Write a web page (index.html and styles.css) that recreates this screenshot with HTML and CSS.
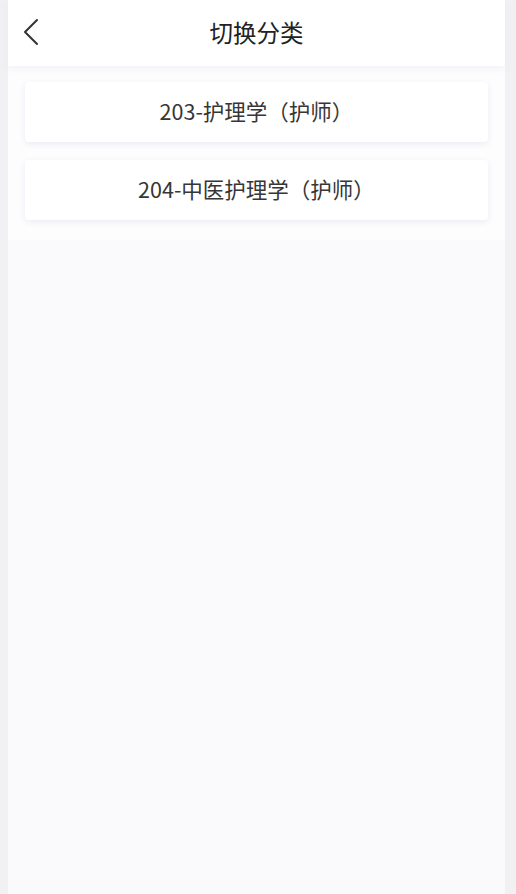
FILE: index.html
```html
<!DOCTYPE html>
<html lang="zh">
<head>
<meta charset="utf-8">
<title>切换分类</title>
<link rel="stylesheet" href="styles.css">
</head>
<body>
<div class="frame">
  <div class="panel">
    <header class="topbar">
      <button class="back" aria-label="返回">
        <svg width="18" height="28" viewBox="0 0 18 28"><path d="M15 2 L3 14 L15 26" fill="none" stroke="#333" stroke-width="2" stroke-linecap="round" stroke-linejoin="round"/></svg>
      </button>
      <h1 class="title">切换分类</h1>
    </header>
    <div class="list">
      <div class="card">203-护理学（护师）</div>
      <div class="card">204-中医护理学（护师）</div>
    </div>
    <div class="rest"></div>
  </div>
</div>
</body>
</html>
```
FILE: styles.css
```css
html, body {
  margin: 0;
  padding: 0;
  height: 100%;
}
body {
  background: #f1f1f3;
  font-family: "Noto Sans CJK SC", "Noto Sans", sans-serif;
}
.frame {
  height: 894px;
  padding: 0 11px 0 8px;
  display: flex;
}
.panel {
  flex: 1;
  display: flex;
  flex-direction: column;
  background: #fafafd;
}
.topbar {
  position: relative;
  height: 66px;
  display: flex;
  align-items: flex-start;
  justify-content: center;
  background: #ffffff;
  box-shadow: 0 3px 8px rgba(225, 228, 240, 0.4);
  z-index: 1;
}
.back {
  position: absolute;
  left: 13px;
  top: 18px;
  border: 0;
  background: none;
  padding: 0;
  width: 20px;
  height: 30px;
}
.title {
  margin: 0;
  padding-top: 15px;
  font-size: 23.5px;
  line-height: 34px;
  font-weight: 400;
  color: #222;
}
.list {
  background: #fdfdfe;
  padding: 16px 17px 20px;
  display: flex;
  flex-direction: column;
  gap: 18px;
}
.card {
  height: 60px;
  box-sizing: border-box;
  padding-bottom: 4px;
  background: #fff;
  border-radius: 4px;
  box-shadow: 0 2px 6px rgba(200, 204, 225, 0.35);
  display: flex;
  align-items: center;
  justify-content: center;
  font-size: 21.5px;
  color: #363636;
}
.rest {
  flex: 1;
}
```
